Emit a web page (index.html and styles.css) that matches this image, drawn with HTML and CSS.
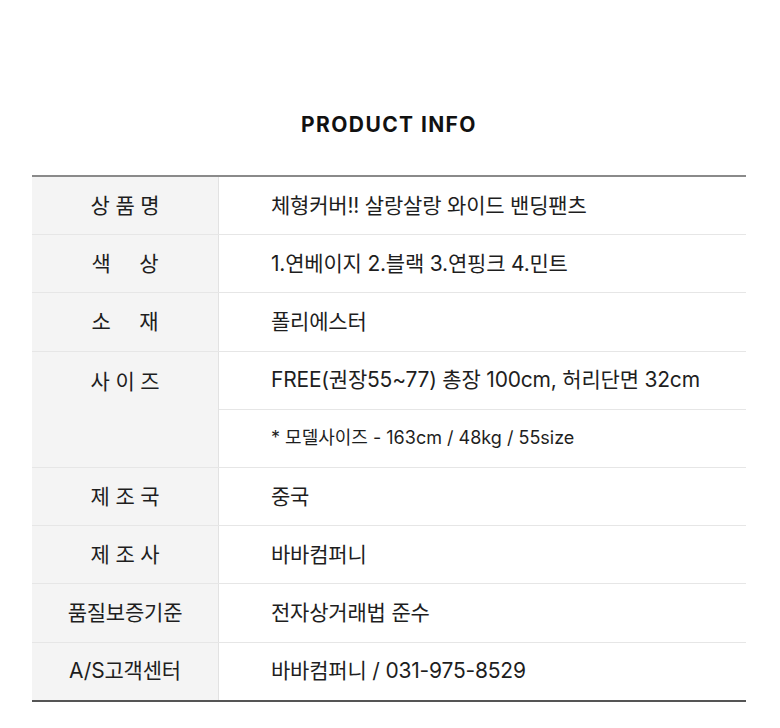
FILE: index.html
```html
<!DOCTYPE html>
<html lang="ko">
<head>
<meta charset="utf-8">
<link rel="stylesheet" href="styles.css">
</head>
<body>
<div class="page">
  <h2 class="title">PRODUCT INFO</h2>
  <table class="info">
    <tr><th>상 품 명</th><td>체형커버!! 살랑살랑 와이드 밴딩팬츠</td></tr>
    <tr><th>색&nbsp;&nbsp;&nbsp;&nbsp;&nbsp;상</th><td>1.연베이지 2.블랙 3.연핑크 4.민트</td></tr>
    <tr><th>소&nbsp;&nbsp;&nbsp;&nbsp;&nbsp;재</th><td>폴리에스터</td></tr>
    <tr><th rowspan="2" class="top">사 이 즈</th><td>FREE(권장55~77) 총장 100cm, 허리단면 32cm</td></tr>
    <tr><td class="small">* 모델사이즈 - 163cm / 48kg / 55size</td></tr>
    <tr><th>제 조 국</th><td>중국</td></tr>
    <tr><th>제 조 사</th><td>바바컴퍼니</td></tr>
    <tr><th>품질보증기준</th><td>전자상거래법 준수</td></tr>
    <tr><th>A/S고객센터</th><td>바바컴퍼니 / 031-975-8529</td></tr>
  </table>
</div>
</body>
</html>
```
FILE: styles.css
```css
html, body { margin: 0; padding: 0; background: #fff; }
body { font-family: "Inter", "Noto Sans CJK KR", sans-serif; color: #222; }
.page { padding: 0 34px 0 32px; }
.title {
  margin: 0;
  padding: 112px 0 37px;
  text-align: center;
  font-family: "Inter", "Noto Sans", sans-serif;
  font-weight: 700;
  font-size: 21px;
  letter-spacing: 1.4px;
  color: #111;
  line-height: 26px;
}
.info {
  width: 100%;
  border-collapse: collapse;
  border-top: 2px solid #8a8a8a;
  border-bottom: 2px solid #555;
}
.info th, .info td {
  height: 53.2px;
  padding: 0 0 4px;
  border-bottom: 1px solid #e6e6e6;
  font-size: 21px;
  font-weight: 400;
  letter-spacing: -0.2px;
  color: #1e1e1e;
  vertical-align: middle;
}
.info th {
  width: 186px;
  background: #f4f4f4;
  border-right: 1px solid #e2e2e2;
  text-align: center;
}
.info th.top { vertical-align: top; padding-top: 13px; }
.info td { padding-left: 52px; text-align: left; }
.info td.small { font-size: 18px; letter-spacing: 0; }
```
